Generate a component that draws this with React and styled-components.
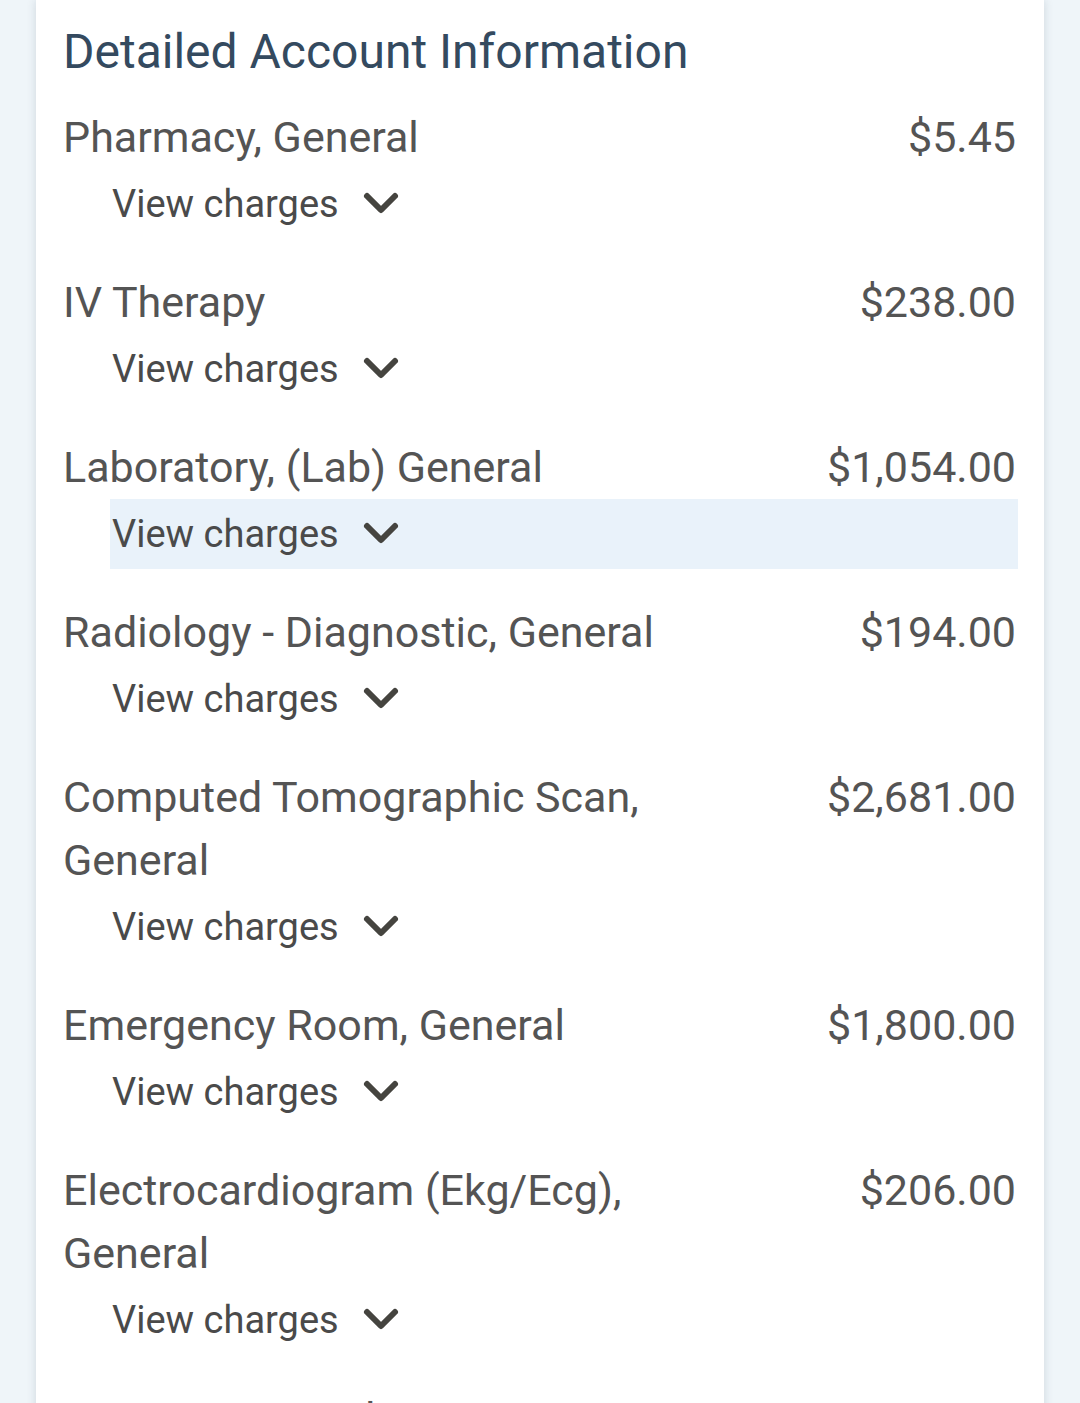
import React from "react";
import styled, { createGlobalStyle } from "styled-components";

const Global = createGlobalStyle`
  html, body { margin: 0; padding: 0; }
  body {
    background: #eff5f9;
    font-family: Roboto, "Liberation Sans", sans-serif;
    -webkit-font-smoothing: antialiased;
  }
`;

const Page = styled.div`
  height: 1403px;
  overflow: hidden;
  padding: 0 36px;
`;

const Card = styled.section`
  background: #ffffff;
  box-shadow: 0 0 9px rgba(40, 60, 80, 0.16);
  padding: 24px 26px 40px 26px;
  min-height: 1500px;
`;

const Title = styled.h2`
  margin: 0 0 26px 0;
  font-size: 48px;
  line-height: 56px;
  font-weight: 400;
  color: #344a5f;
  padding-left: 1px;
`;

const List = styled.div`
  display: flex;
  flex-direction: column;
  gap: 32px;
`;

const Item = styled.div`
  display: flex;
  flex-direction: column;
`;

const Head = styled.div`
  display: flex;
  justify-content: space-between;
  align-items: flex-start;
  font-size: 43px;
  line-height: 63px;
  color: #545454;
`;

const Name = styled.div`
  max-width: 640px;
  padding-left: 1px;
`;

const Amount = styled.div`
  white-space: nowrap;
  text-align: right;
  padding-right: 2px;
`;

const Toggle = styled.button`
  display: flex;
  align-items: center;
  gap: 23px;
  margin-left: 48px;
  height: 70px;
  padding: 0 0 0 2px;
  border: none;
  background: ${(p) => (p.$active ? "#e9f2fa" : "transparent")};
  font-family: inherit;
  font-size: 38px;
  color: #4a4a4a;
  cursor: pointer;
  text-align: left;
`;

const Chevron = () => (
  <svg width="38" height="26" viewBox="0 0 38 26" aria-hidden="true">
    <path
      d="M5 5 L19 19 L33 5"
      fill="none"
      stroke="#45443f"
      strokeWidth="6"
      strokeLinecap="round"
      strokeLinejoin="round"
    />
  </svg>
);

const items = [
  { name: "Pharmacy, General", amount: "$5.45" },
  { name: "IV Therapy", amount: "$238.00" },
  { name: "Laboratory, (Lab) General", amount: "$1,054.00", active: true },
  { name: "Radiology - Diagnostic, General", amount: "$194.00" },
  { name: "Computed Tomographic Scan, General", amount: "$2,681.00" },
  { name: "Emergency Room, General", amount: "$1,800.00" },
  { name: "Electrocardiogram (Ekg/Ecg), General", amount: "$206.00" },
  { name: "Nursery, General", amount: "" },
];

export default function App() {
  return (
    <>
      <Global />
      <Page>
        <Card>
          <Title>Detailed Account Information</Title>
          <List>
            {items.map((it) => (
              <Item key={it.name}>
                <Head>
                  <Name>{it.name}</Name>
                  <Amount>{it.amount}</Amount>
                </Head>
                <Toggle $active={it.active}>
                  <span>View charges</span>
                  <Chevron />
                </Toggle>
              </Item>
            ))}
          </List>
        </Card>
      </Page>
    </>
  );
}
